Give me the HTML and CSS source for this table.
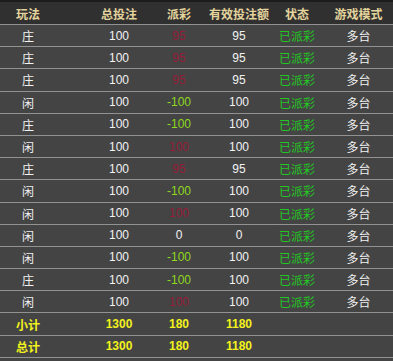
FILE: index.html
```html
<!DOCTYPE html>
<html lang="zh">
<head>
<meta charset="utf-8">
<link rel="stylesheet" href="styles.css">
</head>
<body>
<div class="table">
  <div class="row head">
    <div class="c">玩法</div><div class="c c2">总投注</div><div class="c">派彩</div><div class="c">有效投注额</div><div class="c">状态</div><div class="c">游戏模式</div>
  </div>
  <div class="row"><div class="c">庄</div><div class="c c2">100</div><div class="c red">95</div><div class="c">95</div><div class="c ok">已派彩</div><div class="c">多台</div></div>
  <div class="row"><div class="c">庄</div><div class="c c2">100</div><div class="c red">95</div><div class="c">95</div><div class="c ok">已派彩</div><div class="c">多台</div></div>
  <div class="row"><div class="c">庄</div><div class="c c2">100</div><div class="c red">95</div><div class="c">95</div><div class="c ok">已派彩</div><div class="c">多台</div></div>
  <div class="row"><div class="c">闲</div><div class="c c2">100</div><div class="c green">-100</div><div class="c">100</div><div class="c ok">已派彩</div><div class="c">多台</div></div>
  <div class="row"><div class="c">庄</div><div class="c c2">100</div><div class="c green">-100</div><div class="c">100</div><div class="c ok">已派彩</div><div class="c">多台</div></div>
  <div class="row"><div class="c">闲</div><div class="c c2">100</div><div class="c red">100</div><div class="c">100</div><div class="c ok">已派彩</div><div class="c">多台</div></div>
  <div class="row"><div class="c">庄</div><div class="c c2">100</div><div class="c red">95</div><div class="c">95</div><div class="c ok">已派彩</div><div class="c">多台</div></div>
  <div class="row"><div class="c">闲</div><div class="c c2">100</div><div class="c green">-100</div><div class="c">100</div><div class="c ok">已派彩</div><div class="c">多台</div></div>
  <div class="row"><div class="c">闲</div><div class="c c2">100</div><div class="c red">100</div><div class="c">100</div><div class="c ok">已派彩</div><div class="c">多台</div></div>
  <div class="row"><div class="c">闲</div><div class="c c2">100</div><div class="c">0</div><div class="c">0</div><div class="c ok">已派彩</div><div class="c">多台</div></div>
  <div class="row"><div class="c">闲</div><div class="c c2">100</div><div class="c green">-100</div><div class="c">100</div><div class="c ok">已派彩</div><div class="c">多台</div></div>
  <div class="row"><div class="c">庄</div><div class="c c2">100</div><div class="c green">-100</div><div class="c">100</div><div class="c ok">已派彩</div><div class="c">多台</div></div>
  <div class="row"><div class="c">闲</div><div class="c c2">100</div><div class="c red">100</div><div class="c">100</div><div class="c ok">已派彩</div><div class="c">多台</div></div>
  <div class="row sum"><div class="c">小计</div><div class="c c2">1300</div><div class="c">180</div><div class="c">1180</div><div class="c"></div><div class="c"></div></div>
  <div class="row sum last"><div class="c">总计</div><div class="c c2">1300</div><div class="c">180</div><div class="c">1180</div><div class="c"></div><div class="c"></div></div>
</div>
</body>
</html>
```
FILE: styles.css
```css
html, body {
  margin: 0;
  padding: 0;
  background: #444444;
}
body {
  font-family: "Liberation Sans", "Noto Sans CJK SC", sans-serif;
  font-size: 12px;
  color: #f2f2f2;
}
.table {
  width: 393px;
  border-top: 2px solid #1c1c1c;
}
.row {
  display: grid;
  grid-template-columns: 56px 94px 58px 62px 54px 69px;
  height: 22.2px;
  box-sizing: border-box;
  border-top: 1px solid #929292;
  align-items: center;
}
.row.head {
  height: 22px;
  border-top: none;
  background: #303030;
  color: #e3d39c;
  font-weight: bold;
}
.row.last {
  border-bottom: 1px solid #929292;
  height: 23.2px;
}
.c {
  text-align: center;
  white-space: nowrap;
}
.c2 {
  padding-left: 32px;
}
.red {
  color: #951d38;
}
.green {
  color: #8fd81e;
}
.ok {
  color: #22c822;
}
.sum {
  color: #f2f21c;
  font-weight: bold;
}
```
